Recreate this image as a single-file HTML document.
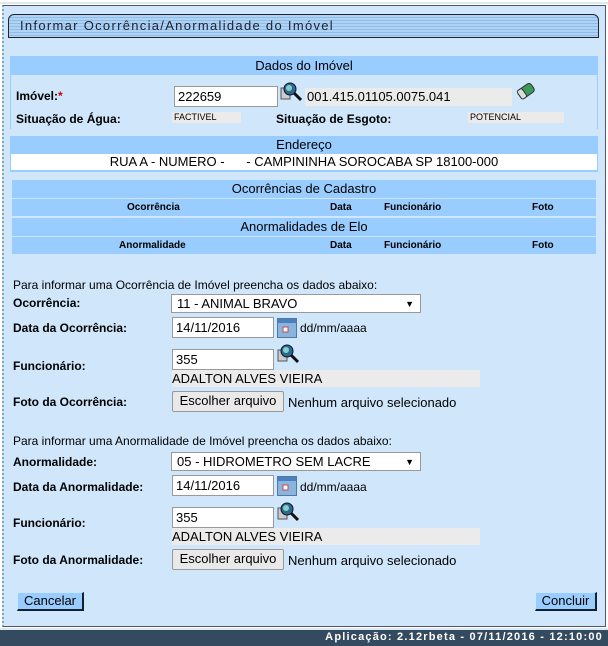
<!DOCTYPE html>
<html><head><meta charset="utf-8"><style>
*{margin:0;padding:0;box-sizing:border-box}
body{width:608px;height:646px;position:relative;background:#fff;font-family:"Liberation Sans",Arial,sans-serif;font-size:13px;color:#000;overflow:hidden}
.a{position:absolute;white-space:nowrap}
.b{font-weight:bold;font-size:12px}
.hdr{position:absolute;background:#99ccff;text-align:center;font-size:13px}
.inp{position:absolute;background:#fff;border:1px solid #999;font-size:13px;padding:2px 3px}
.gray{position:absolute;background:#ebebeb;font-size:13px}
.btn{position:absolute;background:#e9e9e9;border:1px solid #999;border-radius:2px;font-size:13px;text-align:center;line-height:18px}
.sbtn{position:absolute;background:#99ccff;border:1px solid #000;border-top-color:#cfe6ff;border-left-color:#cfe6ff;border-right:2px solid #123;border-bottom:2px solid #123;font-size:13px;text-align:center;line-height:16px}
</style></head><body>
<div class="a" style="left:0;top:2px;width:608px;height:2px;background:#dbe9f5"></div>
<div class="a" style="left:2px;top:5px;width:604px;height:622px;background:#cfe6fb;border:1px solid #556;border-left:2px dotted #8aa"></div>
<div class="a" style="left:8px;top:14px;width:591px;height:24px;border:1px solid #223;border-radius:6px 6px 0 0;background:repeating-linear-gradient(#aed3f5 0 2px,#8fbde8 2px 3px)"></div>
<div class="a" style="left:20px;top:18px;font-size:13px;letter-spacing:1.3px;color:#223">Informar Ocorrência/Anormalidade do Imóvel</div>
<div class="hdr" style="left:10px;top:56px;width:588px;height:19px;line-height:19px">Dados do Imóvel</div>
<div class="a" style="left:10px;top:75px;width:588px;height:54px;background:#cfe6fb;border-left:1px solid #99ccff;border-right:1px solid #99ccff"></div>
<div class="a b" style="left:16px;top:89px">Imóvel:<span style="color:#c00">*</span></div>
<div class="inp" style="left:174px;top:86px;width:104px;height:21px">222659</div>
<svg class="a" style="left:280px;top:82px" width="22" height="20"><rect x="1" y="6" width="9" height="11" fill="#ccc" stroke="#555"/><circle cx="10" cy="7" r="6" fill="#2a6b8a" stroke="#113"/><circle cx="9" cy="6" r="3" fill="#8cc"/><line x1="14" y1="11" x2="21" y2="18" stroke="#111" stroke-width="3"/></svg>
<div class="gray" style="left:305px;top:88px;width:207px;height:18px;line-height:18px;padding-left:2px">001.415.01105.0075.041</div>
<svg class="a" style="left:515px;top:80px" width="22" height="22"><g transform="rotate(-35 11 11)"><rect x="3" y="6" width="16" height="10" rx="3" fill="#3a9a5a" stroke="#333"/><rect x="3" y="6" width="6" height="10" rx="2" fill="#ddd" stroke="#333"/></g></svg>
<div class="a b" style="left:16px;top:112px">Situação de Água:</div>
<div class="gray" style="left:172px;top:112px;width:69px;height:11px;font-size:9px;line-height:11px;padding-left:2px">FACTIVEL</div>
<div class="a b" style="left:276px;top:112px">Situação de Esgoto:</div>
<div class="gray" style="left:468px;top:112px;width:96px;height:11px;font-size:9px;line-height:11px;padding-left:2px">POTENCIAL</div>
<div class="hdr" style="left:10px;top:136px;width:588px;height:36px"></div>
<div class="a" style="left:10px;top:137px;width:588px;text-align:center">Endereço</div>
<div class="a" style="left:11px;top:154px;width:586px;height:16px;background:#fff;text-align:center;font-size:13px;line-height:16px">RUA A - NUMERO - &nbsp; &nbsp; &nbsp;- CAMPININHA SOROCABA SP 18100-000</div>
<div class="hdr" style="left:12px;top:180px;width:584px;height:36px"></div>
<div class="a" style="left:12px;top:181px;width:584px;text-align:center">Ocorrências de Cadastro</div>
<div class="a" style="left:12px;top:198px;width:584px;height:1px;background:#cfe6fb"></div>
<div class="a b" style="left:127px;top:202px;font-size:10px">Ocorrência</div>
<div class="a b" style="left:330px;top:202px;font-size:10px">Data</div>
<div class="a b" style="left:384px;top:202px;font-size:10px">Funcionário</div>
<div class="a b" style="left:532px;top:202px;font-size:10px">Foto</div>
<div class="hdr" style="left:12px;top:218px;width:584px;height:36px"></div>
<div class="a" style="left:12px;top:219px;width:584px;text-align:center">Anormalidades de Elo</div>
<div class="a" style="left:12px;top:236px;width:584px;height:1px;background:#cfe6fb"></div>
<div class="a b" style="left:119px;top:240px;font-size:10px">Anormalidade</div>
<div class="a b" style="left:330px;top:240px;font-size:10px">Data</div>
<div class="a b" style="left:384px;top:240px;font-size:10px">Funcionário</div>
<div class="a b" style="left:532px;top:240px;font-size:10px">Foto</div>

<div class="a" style="left:13px;top:278px;font-size:12px">Para informar uma Ocorrência de Imóvel preencha os dados abaixo:</div>
<div class="a b" style="left:13px;top:296px">Ocorrência:</div>
<div class="inp" style="left:171px;top:294px;width:250px;height:19px;padding:1px 5px;line-height:16px">11 - ANIMAL BRAVO<span style="position:absolute;right:6px;font-size:9px">▼</span></div>
<div class="a b" style="left:13px;top:321px">Data da Ocorrência:</div>
<div class="inp" style="left:172px;top:317px;width:102px;height:21px">14/11/2016</div>
<svg class="a" style="left:277px;top:318px" width="20" height="20"><rect x="0.5" y="0.5" width="19" height="19" fill="#8ab4e0" stroke="#579"/><rect x="1" y="1" width="18" height="4" fill="#4a7fc0"/><rect x="6" y="9" width="5" height="5" fill="#fff" stroke="#c44"/></svg>
<div class="a" style="left:300px;top:321px;font-size:12px">dd/mm/aaaa</div>
<div class="a b" style="left:13px;top:359px">Funcionário:</div>
<div class="inp" style="left:172px;top:349px;width:102px;height:21px">355</div>
<svg class="a" style="left:277px;top:344px" width="22" height="20"><rect x="1" y="6" width="9" height="11" fill="#ccc" stroke="#555"/><circle cx="10" cy="7" r="6" fill="#2a6b8a" stroke="#113"/><circle cx="9" cy="6" r="3" fill="#8cc"/><line x1="14" y1="11" x2="21" y2="18" stroke="#111" stroke-width="3"/></svg>
<div class="gray" style="left:172px;top:370px;width:308px;height:17px;line-height:17px">ADALTON ALVES VIEIRA</div>
<div class="a b" style="left:13px;top:395px">Foto da Ocorrência:</div>
<div class="btn" style="left:172px;top:391px;width:112px;height:21px">Escolher arquivo</div>
<div class="a" style="left:288px;top:395px">Nenhum arquivo selecionado</div>

<div class="a" style="left:13px;top:434px;font-size:12px">Para informar uma Anormalidade de Imóvel preencha os dados abaixo:</div>
<div class="a b" style="left:13px;top:455px">Anormalidade:</div>
<div class="inp" style="left:171px;top:452px;width:250px;height:19px;padding:1px 5px;line-height:16px">05 - HIDROMETRO SEM LACRE<span style="position:absolute;right:6px;font-size:9px">▼</span></div>
<div class="a b" style="left:13px;top:480px">Data da Anormalidade:</div>
<div class="inp" style="left:172px;top:475px;width:102px;height:21px">14/11/2016</div>
<svg class="a" style="left:277px;top:476px" width="20" height="20"><rect x="0.5" y="0.5" width="19" height="19" fill="#8ab4e0" stroke="#579"/><rect x="1" y="1" width="18" height="4" fill="#4a7fc0"/><rect x="6" y="9" width="5" height="5" fill="#fff" stroke="#c44"/></svg>
<div class="a" style="left:300px;top:480px;font-size:12px">dd/mm/aaaa</div>
<div class="a b" style="left:13px;top:516px">Funcionário:</div>
<div class="inp" style="left:172px;top:507px;width:102px;height:21px">355</div>
<svg class="a" style="left:277px;top:502px" width="22" height="20"><rect x="1" y="6" width="9" height="11" fill="#ccc" stroke="#555"/><circle cx="10" cy="7" r="6" fill="#2a6b8a" stroke="#113"/><circle cx="9" cy="6" r="3" fill="#8cc"/><line x1="14" y1="11" x2="21" y2="18" stroke="#111" stroke-width="3"/></svg>
<div class="gray" style="left:172px;top:528px;width:308px;height:17px;line-height:17px">ADALTON ALVES VIEIRA</div>
<div class="a b" style="left:13px;top:553px">Foto da Anormalidade:</div>
<div class="btn" style="left:172px;top:549px;width:112px;height:21px">Escolher arquivo</div>
<div class="a" style="left:288px;top:553px">Nenhum arquivo selecionado</div>

<div class="sbtn" style="left:17px;top:592px;width:67px;height:19px">Cancelar</div>
<div class="sbtn" style="left:535px;top:592px;width:62px;height:19px">Concluir</div>

<div class="a" style="left:0;top:628px;width:608px;height:2px;background:#dbe9f5"></div>
<div class="a" style="left:0;top:630px;width:608px;height:16px;background:#344a5f"></div>
<div class="a" style="right:5px;top:631px;color:#fff;font-weight:bold;font-size:11px;letter-spacing:1.2px">Aplicação: 2.12rbeta - 07/11/2016 - 12:10:00</div>
</body></html>
